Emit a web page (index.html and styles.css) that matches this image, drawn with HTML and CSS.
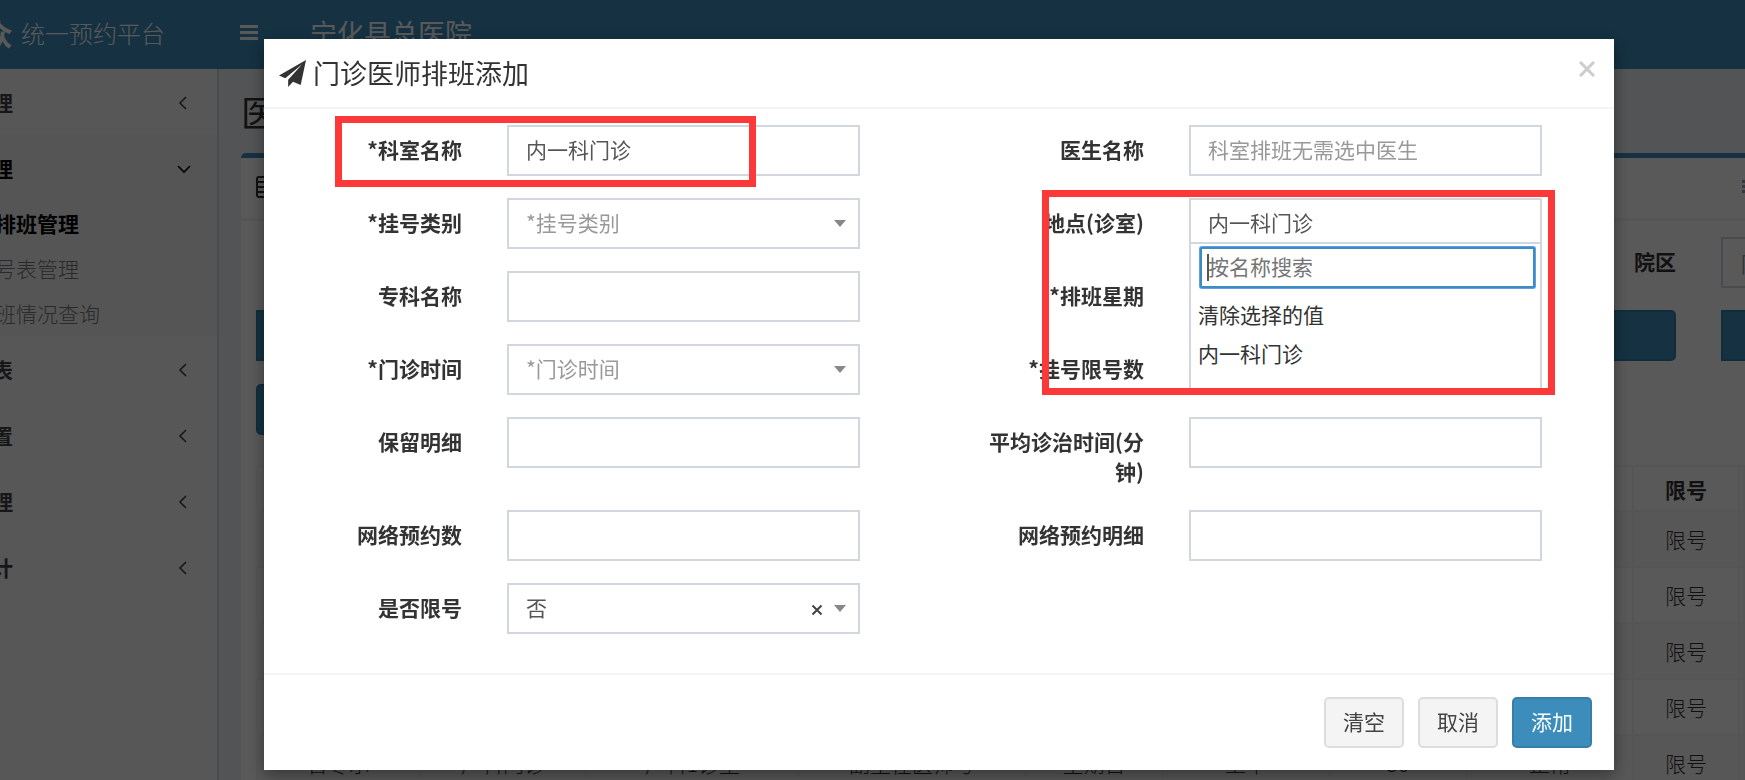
FILE: index.html
```html
<!DOCTYPE html>
<html lang="zh-CN">

<head>
    <meta charset="UTF-8">
    <meta name="viewport" content="width=device-width, initial-scale=1.0">
    <title>统一预约平台</title>
    <link rel="stylesheet" href="styles.css">
</head>

<body>
    <header class="main-header">
        <a href="#" class="logo"><b>众</b><span>统一预约平台</span></a>
        <button type="button" class="sidebar-toggle" aria-label="菜单">
            <svg width="18" height="15" viewBox="0 0 18 15"><path d="M0 0h18v3H0zM0 6h18v3H0zM0 12h18v3H0z" fill="currentColor"/></svg>
        </button>
        <span class="hospital">宁化县总医院</span>
    </header>

    <div class="wrapper">
        <nav class="sidebar">
            <ul class="menu">
                <li>
                    <a href="#">理<svg class="angle" viewBox="0 0 12 12"><path d="M8 1L2 7l6 6"/></svg></a>
                </li>
                <li class="active">
                    <a href="#">理<svg class="angle" viewBox="0 0 12 12"><path d="M0 4l6 6 6-6"/></svg></a>
                    <ul class="submenu">
                        <li><a href="#" class="current">排班管理</a></li>
                        <li><a href="#">号表管理</a></li>
                        <li><a href="#">班情况查询</a></li>
                    </ul>
                </li>
                <li>
                    <a href="#">表<svg class="angle" viewBox="0 0 12 12"><path d="M8 1L2 7l6 6"/></svg></a>
                </li>
                <li>
                    <a href="#">置<svg class="angle" viewBox="0 0 12 12"><path d="M8 1L2 7l6 6"/></svg></a>
                </li>
                <li>
                    <a href="#">理<svg class="angle" viewBox="0 0 12 12"><path d="M8 1L2 7l6 6"/></svg></a>
                </li>
                <li>
                    <a href="#">计<svg class="angle" viewBox="0 0 12 12"><path d="M8 1L2 7l6 6"/></svg></a>
                </li>
            </ul>
        </nav>

        <main class="content">
            <h1>医</h1>
            <section class="box">
                <div class="box-header">
                    <svg class="table-icon" viewBox="0 0 22 22"><path d="M3 1h16a2 2 0 0 1 2 2v16a2 2 0 0 1-2 2H3a2 2 0 0 1-2-2V3a2 2 0 0 1 2-2zM1 6h20M1 11h20M1 16h20"/></svg>
                    <svg class="list-icon" viewBox="0 0 16 14"><path d="M0 0h16v3H0zM0 5h16v3H0zM0 10h16v3H0z"/></svg>
                </div>
                <div class="box-body">
                    <div class="filter">
                        <label for="area">院区</label>
                        <input id="area" type="text" placeholder="院区">
                    </div>
                    <div class="bars">
                        <button type="button" class="bar bar-left" aria-label="查询"></button>
                        <button type="button" class="bar bar-right" aria-label="重置"></button>
                    </div>
                    <button type="button" class="bar bar-add" aria-label="新增"></button>

                    <table class="list">
                        <colgroup>
                            <col class="w1"><col class="w2"><col class="w3"><col class="w4"><col class="w5">
                            <col class="w2"><col class="w5"><col class="w2"><col class="w6"><col>
                        </colgroup>
                        <thead>
                            <tr><th></th><th></th><th></th><th></th><th></th><th></th><th></th><th></th><th>限号</th><th></th></tr>
                        </thead>
                        <tbody>
                            <tr><td></td><td></td><td></td><td></td><td></td><td></td><td></td><td></td><td>限号</td><td></td></tr>
                            <tr><td></td><td></td><td></td><td></td><td></td><td></td><td></td><td></td><td>限号</td><td></td></tr>
                            <tr><td></td><td></td><td></td><td></td><td></td><td></td><td></td><td></td><td>限号</td><td></td></tr>
                            <tr><td></td><td></td><td></td><td></td><td></td><td></td><td></td><td></td><td>限号</td><td></td></tr>
                            <tr><td>曾冬示</td><td>产科门诊</td><td>产科1诊室</td><td>副主任医师号</td><td>星期日</td><td>上午</td><td>30</td><td>正常</td><td>限号</td><td></td></tr>
                        </tbody>
                    </table>
                </div>
            </section>
        </main>
    </div>

    <div class="overlay">
        <div class="modal" role="dialog" aria-labelledby="modal-title">
            <div class="modal-header">
                <h4 id="modal-title">
                    <svg class="plane" viewBox="0 0 28 28"><path d="M28 0L0 16l6.500 3L24 4.500 9.500 20.500V28l5-5.500 8 3.500z"/></svg>
                    门诊医师排班添加
                </h4>
                <button type="button" class="close" aria-label="关闭">
                    <svg width="16" height="16" viewBox="0 0 16 16"><path d="M1 1l14 14M15 1L1 15"/></svg>
                </button>
            </div>

            <form class="modal-body">
                <div class="group marked">
                    <label for="dept">*科室名称</label>
                    <input id="dept" class="field" type="text" value="内一科门诊">
                </div>
                <div class="group">
                    <label for="doctor">医生名称</label>
                    <input id="doctor" class="field" type="text" placeholder="科室排班无需选中医生">
                </div>

                <div class="group">
                    <label for="type">*挂号类别</label>
                    <div class="select">
                        <select id="type" class="field empty"><option>*挂号类别</option></select>
                    </div>
                </div>
                <div class="group place">
                    <label for="place">地点(诊室)</label>
                    <div class="combo">
                        <input id="place" class="field" type="text" value="内一科门诊">
                        <div class="dropdown">
                            <div class="search"><input type="text" placeholder="按名称搜索" aria-label="按名称搜索"></div>
                            <ul>
                                <li>清除选择的值</li>
                                <li>内一科门诊</li>
                            </ul>
                        </div>
                    </div>
                </div>

                <div class="group">
                    <label for="special">专科名称</label>
                    <input id="special" class="field" type="text">
                </div>
                <div class="group">
                    <label for="week">*排班星期</label>
                    <input id="week" class="field" type="text">
                </div>

                <div class="group">
                    <label for="time">*门诊时间</label>
                    <div class="select">
                        <select id="time" class="field empty"><option>*门诊时间</option></select>
                    </div>
                </div>
                <div class="group">
                    <label for="limit">*挂号限号数</label>
                    <input id="limit" class="field" type="text">
                </div>

                <div class="group">
                    <label for="keep">保留明细</label>
                    <input id="keep" class="field" type="text">
                </div>
                <div class="group">
                    <label for="avg">平均诊治时间(分钟)</label>
                    <input id="avg" class="field" type="text">
                </div>

                <div class="group">
                    <label for="net">网络预约数</label>
                    <input id="net" class="field" type="text">
                </div>
                <div class="group">
                    <label for="netdetail">网络预约明细</label>
                    <input id="netdetail" class="field" type="text">
                </div>

                <div class="group">
                    <label for="islimit">是否限号</label>
                    <div class="select">
                        <select id="islimit" class="field"><option>否</option></select>
                        <button type="button" class="clear" aria-label="清除">
                            <svg width="12" height="12" viewBox="0 0 12 12"><path d="M1.500 1.500l9 9M10.500 1.500l-9 9"/></svg>
                        </button>
                    </div>
                </div>
            </form>

            <div class="modal-footer">
                <button type="button" class="btn">清空</button>
                <button type="button" class="btn">取消</button>
                <button type="button" class="btn btn-primary">添加</button>
            </div>
        </div>
    </div>
</body>

</html>
```
FILE: styles.css
```css
* {
    margin: 0;
    padding: 0;
    box-sizing: border-box;
}

body {
    height: 100vh;
    overflow: hidden;
    font-family: "Noto Sans CJK SC", "Liberation Sans", sans-serif;
    font-size: 21px;
    font-weight: 400;
    line-height: 30px;
    color: #333;
    background: #ecf0f5;
}

input,
select,
button {
    font: inherit;
    color: inherit;
}

a {
    color: inherit;
    text-decoration: none;
}

ul {
    list-style: none;
}

/* top bar */

.main-header {
    display: flex;
    align-items: center;
    height: 69px;
    padding-bottom: 4px;
    background: #3c8dbc;
    color: #fff;
}

.logo {
    display: flex;
    align-items: center;
    gap: 8px;
    width: 240px;
    margin-left: -18px;
    font-size: 24px;
    font-weight: 300;
}

.logo b {
    font-size: 31px;
    font-weight: bold;
}

.sidebar-toggle {
    width: 88px;
    padding-left: 18px;
    border: none;
    background: none;
    text-align: left;
    line-height: 0;
}

.hospital {
    font-size: 27px;
}

/* left menu */

.wrapper {
    display: flex;
    min-height: calc(100vh - 69px);
}

.sidebar {
    flex: 0 0 219px;
    overflow: hidden;
    background: #f9fafc;
    border-right: 2px solid #d2d6de;
}

.menu > li > a {
    display: flex;
    align-items: center;
    justify-content: space-between;
    height: 66px;
    margin-left: -8px;
    padding-right: 27px;
    font-weight: bold;
    color: #444;
}

.menu .active {
    background: #f4f4f5;
}

.menu > .active > a {
    color: #000;
}

.angle {
    width: 12px;
    height: 12px;
    overflow: visible;
    fill: none;
    stroke: currentColor;
    stroke-width: 1.6;
}

.submenu a {
    display: block;
    margin-left: -5px;
    font-weight: 300;
    line-height: 45px;
    color: #777;
}

.submenu .current {
    font-weight: bold;
    color: #000;
}

/* page content */

.content {
    flex: 1;
    min-width: 0;
    padding: 20px 0 0 22px;
}

.content h1 {
    font-size: 36px;
    font-weight: 400;
    line-height: 44px;
}

.box {
    margin-top: 20px;
    border-top: 5px solid #3c8dbc;
    border-top-left-radius: 5px;
    background: #fff;
}

.box-header {
    display: flex;
    align-items: center;
    justify-content: space-between;
    height: 63px;
    padding: 0 0 3px 15px;
    border-bottom: 3px solid #f4f4f4;
    overflow: hidden;
}

.table-icon {
    width: 22px;
    height: 22px;
    fill: none;
    stroke: #333;
    stroke-width: 2;
}

.list-icon {
    width: 16px;
    height: 14px;
    margin-right: -13px;
    fill: #97a0b3;
}

.box-body {
    padding: 16px 0 0 15px;
}

.filter {
    display: flex;
    align-items: center;
    justify-content: flex-end;
    gap: 45px;
    overflow: hidden;
}

.filter label {
    padding-bottom: 3px;
    font-weight: bold;
}

.filter input {
    width: 353px;
    height: 51px;
    margin-right: -329px;
    padding: 0 18px;
    border: 2px solid #d2d6de;
}

.filter input::placeholder {
    color: #999;
}

.bars {
    display: flex;
    gap: 45px;
    margin: 22px 0 23px;
}

.bar {
    display: block;
    height: 51px;
    border: 2px solid #367fa9;
    background: #3c8dbc;
}

.bar-left {
    flex: 1;
    border-radius: 0 5px 5px 0;
}

.bar-right {
    flex: 0 0 24px;
    border-right: none;
}

.bar-add {
    width: 120px;
    border-radius: 5px;
}

.list {
    width: 100%;
    margin-top: 30px;
    table-layout: fixed;
    border-collapse: collapse;
    text-align: center;
}

.list th,
.list td {
    height: 56px;
    border: 2px solid #f4f4f4;
    font-weight: 300;
    white-space: nowrap;
}

.list th {
    height: 45px;
    font-weight: bold;
}

.list td {
    border-top-color: #ddd;
}

.list tbody tr:nth-child(odd) {
    background: #f9f9f9;
}

.w1 { width: 163px; }
.w2 { width: 166px; }
.w3 { width: 213px; }
.w4 { width: 226px; }
.w5 { width: 138px; }
.w6 { width: 106px; }

/* dialog */

.overlay {
    position: fixed;
    inset: 0;
    padding: 39px 0 0 133px;
    background: rgba(0, 0, 0, .65);
}

.modal {
    max-width: 1350px;
    margin: 0 auto;
    background: #fff;
    box-shadow: 0 5px 15px rgba(0, 0, 0, .4);
}

.modal-header {
    display: flex;
    justify-content: space-between;
    align-items: flex-start;
    padding: 15px 19px 15px 15px;
    border-bottom: 2px solid #f4f4f4;
}

.modal-header h4 {
    display: flex;
    align-items: center;
    gap: 7px;
    font-size: 27px;
    font-weight: 400;
    line-height: 38px;
}

.plane {
    width: 27px;
    height: 27px;
    fill: #333;
}

.close {
    padding-top: 7px;
    border: none;
    background: none;
    line-height: 0;
}

.close path {
    stroke: #ccc;
    stroke-width: 3;
}

.modal-body {
    display: grid;
    grid-template-columns: 1fr 1fr;
    gap: 22px 104px;
    padding: 16px 72px 39px 18px;
}

.group {
    position: relative;
    display: flex;
    align-items: flex-start;
    gap: 45px;
}

.group label {
    flex: 0 0 180px;
    padding: 9px 0 2px;
    text-align: right;
    font-weight: bold;
}

.field {
    flex: 1;
    width: 100%;
    min-width: 0;
    height: 51px;
    padding: 0 17px 3px;
    border: 2px solid #d2d6de;
    border-radius: 0;
    background: #fff;
    color: #555;
    outline: none;
}

.field::placeholder,
.field.empty {
    color: #999;
}

.select,
.combo {
    position: relative;
    flex: 1;
    min-width: 0;
}

.select select {
    display: block;
    appearance: none;
}

.select::after {
    content: "";
    position: absolute;
    top: 22px;
    right: 14px;
    border: 6px solid transparent;
    border-top: 7px solid #888;
    border-bottom: none;
}

.clear {
    position: absolute;
    top: 21px;
    right: 37px;
    border: none;
    background: none;
    line-height: 0;
}

.clear path {
    stroke: #444;
    stroke-width: 2;
}

.dropdown {
    position: absolute;
    top: 44px;
    left: 0;
    right: 0;
    z-index: 1;
    height: 150px;
    padding: 0 5px 0 7px;
    border: 2px solid #d2d6de;
    background: #fff;
}

.search {
    position: relative;
    padding: 3px 0 0 2px;
}

/* text cursor */
.search::before {
    content: "";
    position: absolute;
    top: 10px;
    left: 9px;
    width: 2px;
    height: 27px;
    background: #555;
}

.search input {
    display: block;
    width: 100%;
    height: 41px;
    padding: 0 6px 3px;
    border: 2px solid #3c8dbc;
    border-radius: 2px;
    outline: none;
    box-shadow: 0 0 0 1px #5e9cf5;
}

.search input::placeholder {
    color: #757575;
}

.dropdown ul {
    padding-top: 7px;
}

.dropdown li {
    line-height: 39px;
}

/* highlight frames */

.marked::after,
.place::after {
    content: "";
    position: absolute;
    z-index: 2;
    border: 7px solid #fc3838;
    pointer-events: none;
}

.marked::after {
    top: -9px;
    bottom: -11px;
    left: 53px;
    right: 104px;
}

.place::after {
    top: -8px;
    bottom: -146px;
    left: 78px;
    right: -13px;
}

.modal-footer {
    display: flex;
    justify-content: flex-end;
    gap: 14px;
    padding: 22px;
    border-top: 2px solid #f4f4f4;
}

.btn {
    height: 51px;
    padding: 0 17px 3px;
    border: 2px solid #ddd;
    border-radius: 5px;
    background: #f4f4f4;
    color: #444;
}

.btn-primary {
    border-color: #367fa9;
    background: #3c8dbc;
    color: #fff;
}
```
